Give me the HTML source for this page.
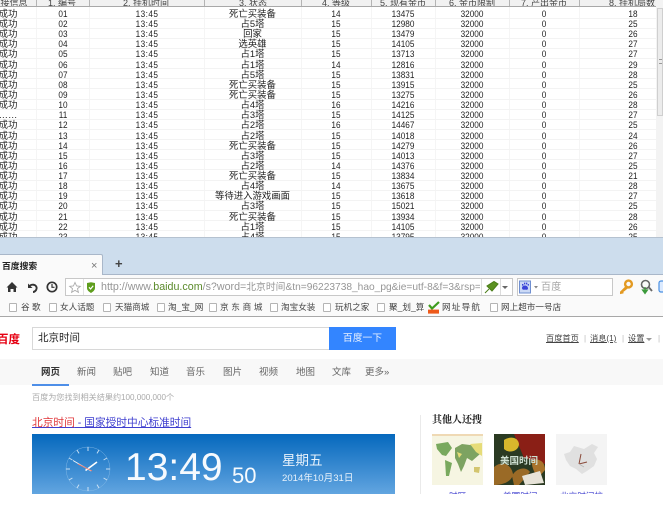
<!DOCTYPE html>
<html lang="zh"><head><meta charset="utf-8"><title>百度搜索</title>
<style>
html,body{margin:0;padding:0;background:#fff}
body{width:663px;height:510px;overflow:hidden;position:relative;font-family:"Liberation Sans","Noto Sans CJK SC",sans-serif;color:#333}
.a{position:absolute;white-space:nowrap}
#tb{position:absolute;left:0;top:0;width:656px;height:237px;overflow:hidden;filter:blur(.3px)}
.r{position:absolute;left:0;width:656px;height:10.13px;border-bottom:1px solid #f3f3f3;box-sizing:border-box}
.r b{position:absolute;top:.6px;font-weight:400;line-height:10px;font-size:9.4px;transform:translateX(-50%) scaleX(.875);white-space:nowrap;color:#222}
.c0{left:8px}.c1{left:62.5px}.c2{left:146.5px;letter-spacing:.5px}.c3{left:252.5px}.c4{left:336px}.c5{left:403px}.c6{left:472px}.c7{left:544px}.c8{left:633px}
.r b.c0,.r b.c3{font-size:9.4px;transform:translateX(-50%)}
.v{position:absolute;top:0;height:237px;width:1px;background:#f5f5f5}
#hd{position:absolute;left:0;top:0;width:656px;height:7px;background:#f1f1f1;border-bottom:1px solid #a8a8a8;overflow:hidden;box-sizing:border-box}
#hd b{position:absolute;top:-2.5px;font-weight:400;font-size:9px;line-height:10px;transform:translateX(-50%);white-space:nowrap;color:#444}
#hd i{position:absolute;top:0;width:1px;height:7px;background:#b4b4b4}
.bm{position:absolute;top:303px;width:8px;height:9px;border:1px solid #b4b4b4;border-radius:1px;box-sizing:border-box;background:#fff}
.bt{position:absolute;top:301px;font-size:8.6px;line-height:12px;color:#444;white-space:nowrap;filter:blur(.2px)}
.nv{position:absolute;top:366px;font-size:9.5px;line-height:14px;color:#666;white-space:nowrap}
.lk{position:absolute;top:333px;font-size:8.2px;line-height:12px;color:#444;text-decoration:underline;white-space:nowrap}
</style></head><body>

<div id="tb">
<div class="v" style="left:36px"></div><div class="v" style="left:89px"></div><div class="v" style="left:204px"></div><div class="v" style="left:301px"></div><div class="v" style="left:371px"></div><div class="v" style="left:435px"></div><div class="v" style="left:509px"></div><div class="v" style="left:579px"></div>
<div class="r" style="top:8.4px"><b class="c0">成功</b><b class="c1">01</b><b class="c2">13:45</b><b class="c3">死亡买装备</b><b class="c4">14</b><b class="c5">13475</b><b class="c6">32000</b><b class="c7">0</b><b class="c8">18</b></div>
<div class="r" style="top:18.5px"><b class="c0">成功</b><b class="c1">02</b><b class="c2">13:45</b><b class="c3">占5塔</b><b class="c4">15</b><b class="c5">12980</b><b class="c6">32000</b><b class="c7">0</b><b class="c8">25</b></div>
<div class="r" style="top:28.7px"><b class="c0">成功</b><b class="c1">03</b><b class="c2">13:45</b><b class="c3">回家</b><b class="c4">15</b><b class="c5">13479</b><b class="c6">32000</b><b class="c7">0</b><b class="c8">26</b></div>
<div class="r" style="top:38.8px"><b class="c0">成功</b><b class="c1">04</b><b class="c2">13:45</b><b class="c3">选英雄</b><b class="c4">15</b><b class="c5">14105</b><b class="c6">32000</b><b class="c7">0</b><b class="c8">27</b></div>
<div class="r" style="top:48.9px"><b class="c0">成功</b><b class="c1">05</b><b class="c2">13:45</b><b class="c3">占1塔</b><b class="c4">15</b><b class="c5">13713</b><b class="c6">32000</b><b class="c7">0</b><b class="c8">27</b></div>
<div class="r" style="top:59.1px"><b class="c0">成功</b><b class="c1">06</b><b class="c2">13:45</b><b class="c3">占1塔</b><b class="c4">14</b><b class="c5">12816</b><b class="c6">32000</b><b class="c7">0</b><b class="c8">29</b></div>
<div class="r" style="top:69.2px"><b class="c0">成功</b><b class="c1">07</b><b class="c2">13:45</b><b class="c3">占5塔</b><b class="c4">15</b><b class="c5">13831</b><b class="c6">32000</b><b class="c7">0</b><b class="c8">28</b></div>
<div class="r" style="top:79.3px"><b class="c0">成功</b><b class="c1">08</b><b class="c2">13:45</b><b class="c3">死亡买装备</b><b class="c4">15</b><b class="c5">13915</b><b class="c6">32000</b><b class="c7">0</b><b class="c8">25</b></div>
<div class="r" style="top:89.4px"><b class="c0">成功</b><b class="c1">09</b><b class="c2">13:45</b><b class="c3">死亡买装备</b><b class="c4">15</b><b class="c5">13275</b><b class="c6">32000</b><b class="c7">0</b><b class="c8">26</b></div>
<div class="r" style="top:99.6px"><b class="c0">成功</b><b class="c1">10</b><b class="c2">13:45</b><b class="c3">占4塔</b><b class="c4">16</b><b class="c5">14216</b><b class="c6">32000</b><b class="c7">0</b><b class="c8">28</b></div>
<div class="r" style="top:109.7px"><b class="c0">……</b><b class="c1">11</b><b class="c2">13:45</b><b class="c3">占3塔</b><b class="c4">15</b><b class="c5">14125</b><b class="c6">32000</b><b class="c7">0</b><b class="c8">27</b></div>
<div class="r" style="top:119.8px"><b class="c0">成功</b><b class="c1">12</b><b class="c2">13:45</b><b class="c3">占2塔</b><b class="c4">16</b><b class="c5">14467</b><b class="c6">32000</b><b class="c7">0</b><b class="c8">25</b></div>
<div class="r" style="top:130px"><b class="c0">成功</b><b class="c1">13</b><b class="c2">13:45</b><b class="c3">占2塔</b><b class="c4">15</b><b class="c5">14018</b><b class="c6">32000</b><b class="c7">0</b><b class="c8">24</b></div>
<div class="r" style="top:140.1px"><b class="c0">成功</b><b class="c1">14</b><b class="c2">13:45</b><b class="c3">死亡买装备</b><b class="c4">15</b><b class="c5">14279</b><b class="c6">32000</b><b class="c7">0</b><b class="c8">26</b></div>
<div class="r" style="top:150.2px"><b class="c0">成功</b><b class="c1">15</b><b class="c2">13:45</b><b class="c3">占3塔</b><b class="c4">15</b><b class="c5">14013</b><b class="c6">32000</b><b class="c7">0</b><b class="c8">27</b></div>
<div class="r" style="top:160.3px"><b class="c0">成功</b><b class="c1">16</b><b class="c2">13:45</b><b class="c3">占2塔</b><b class="c4">14</b><b class="c5">14376</b><b class="c6">32000</b><b class="c7">0</b><b class="c8">25</b></div>
<div class="r" style="top:170.5px"><b class="c0">成功</b><b class="c1">17</b><b class="c2">13:45</b><b class="c3">死亡买装备</b><b class="c4">15</b><b class="c5">13834</b><b class="c6">32000</b><b class="c7">0</b><b class="c8">21</b></div>
<div class="r" style="top:180.6px"><b class="c0">成功</b><b class="c1">18</b><b class="c2">13:45</b><b class="c3">占4塔</b><b class="c4">14</b><b class="c5">13675</b><b class="c6">32000</b><b class="c7">0</b><b class="c8">28</b></div>
<div class="r" style="top:190.7px"><b class="c0">成功</b><b class="c1">19</b><b class="c2">13:45</b><b class="c3">等待进入游戏画面</b><b class="c4">15</b><b class="c5">13618</b><b class="c6">32000</b><b class="c7">0</b><b class="c8">27</b></div>
<div class="r" style="top:200.9px"><b class="c0">成功</b><b class="c1">20</b><b class="c2">13:45</b><b class="c3">占3塔</b><b class="c4">15</b><b class="c5">15021</b><b class="c6">32000</b><b class="c7">0</b><b class="c8">25</b></div>
<div class="r" style="top:211px"><b class="c0">成功</b><b class="c1">21</b><b class="c2">13:45</b><b class="c3">死亡买装备</b><b class="c4">15</b><b class="c5">13934</b><b class="c6">32000</b><b class="c7">0</b><b class="c8">28</b></div>
<div class="r" style="top:221.1px"><b class="c0">成功</b><b class="c1">22</b><b class="c2">13:45</b><b class="c3">占1塔</b><b class="c4">15</b><b class="c5">14105</b><b class="c6">32000</b><b class="c7">0</b><b class="c8">26</b></div>
<div class="r" style="top:231.2px"><b class="c0">成功</b><b class="c1">23</b><b class="c2">13:45</b><b class="c3">占4塔</b><b class="c4">15</b><b class="c5">13795</b><b class="c6">32000</b><b class="c7">0</b><b class="c8">25</b></div>
<div id="hd">
<i style="left:36px"></i><i style="left:89px"></i><i style="left:204px"></i><i style="left:301px"></i><i style="left:371px"></i><i style="left:435px"></i><i style="left:509px"></i><i style="left:579px"></i>
<b style="left:14px">接信息</b><b style="left:62px">1. 编号</b><b style="left:146px">2. 挂机时间</b><b style="left:253px">3. 状态</b><b style="left:336px">4. 等级</b><b style="left:403px">5. 现有金币</b><b style="left:472px">6. 金币限制</b><b style="left:544px">7. 产出金币</b><b style="left:632px">8. 挂机局数</b>
</div>
</div>

<!-- scrollbar -->
<div class="a" style="left:656px;top:0;width:7px;height:237px;background:#f3f3f3"></div>
<div class="a" style="left:657px;top:8px;width:6px;height:108px;background:#ececec;border:1px solid #cfcfcf;box-sizing:border-box"></div>
<div class="a" style="left:659px;top:59px;width:3px;height:5px;border-top:1px solid #999;border-bottom:1px solid #999;box-sizing:border-box"></div>

<!-- browser chrome -->
<div class="a" style="left:0;top:237px;width:663px;height:1px;background:#b5c2d0"></div>
<div class="a" style="left:0;top:238px;width:663px;height:36px;background:#cddded"></div>
<div class="a" style="left:0;top:274px;width:663px;height:1px;background:#a9b7c9"></div>
<div class="a" style="left:0;top:275px;width:663px;height:41px;background:#fafafa"></div>
<div class="a" style="left:0;top:316px;width:663px;height:1px;background:#a8a8a8"></div>
<div class="a" style="left:0;top:254px;width:103px;height:21px;background:#fafafa;border:1px solid #a9b7c9;border-bottom:0;border-left:0;box-sizing:border-box;border-top-right-radius:2px"></div>
<div class="a" style="left:2px;top:260px;font-size:8.8px;line-height:12px;font-weight:700;color:#222;filter:blur(.2px)">百度搜索</div>
<div class="a" style="left:91px;top:260px;font-size:11px;line-height:12px;color:#777">×</div>
<div class="a" style="left:115px;top:257px;font-size:13px;line-height:14px;font-weight:700;color:#444">+</div>

<svg class="a" style="left:0;top:275px" width="64" height="24" viewBox="0 0 64 24">
<path d="M12 7 L17.5 12.5 L16 12.5 L16 17 L13.5 17 L13.5 14 L10.5 14 L10.5 17 L8 17 L8 12.5 L6.5 12.5 Z" fill="#333"/>
<path d="M28 8.5 L28 13 L32.5 13 Z" fill="#333"/>
<path d="M29 12 C30.5 8.5 37 9 36.6 13.5 C36.3 15.5 34.5 17 33 17" fill="none" stroke="#333" stroke-width="1.9"/>
<circle cx="52" cy="12" r="4.7" fill="none" stroke="#333" stroke-width="1.7"/>
<path d="M52 9 L52 12.3 L54.5 12.3" fill="none" stroke="#333" stroke-width="1.2"/>
</svg>

<!-- address bar -->
<div class="a" style="left:65px;top:278px;width:448px;height:18px;background:#fff;border:1px solid #c8c8c8;box-sizing:border-box"></div>
<div class="a" style="left:83px;top:279px;width:1px;height:16px;background:#e2e2e2"></div>
<svg class="a" style="left:68px;top:281px" width="30" height="13" viewBox="0 0 30 13">
<path d="M7 1.5 L8.6 5 L12.3 5.3 L9.5 7.7 L10.4 11.3 L7 9.4 L3.6 11.3 L4.5 7.7 L1.7 5.3 L5.4 5 Z" fill="none" stroke="#aaa" stroke-width=".9"/>
<path d="M19 2 L23 1.2 L27 2 L27 7 C27 9.5 24.5 11 23 12 C21.5 11 19 9.5 19 7 Z" fill="#5f9e1e"/>
<path d="M21 6.3 L22.6 8 L25.2 4.8" fill="none" stroke="#fff" stroke-width="1.2"/>
</svg>
<div class="a" style="left:101px;top:281px;width:379px;height:13px;overflow:hidden;font-size:10.7px;line-height:13px;color:#969696;filter:blur(.2px)">http://www.<span style="color:#5a8a2a">baidu.com</span>/s?word=<span style="font-size:9.8px">北京时间</span><span style="font-size:10.2px">&amp;tn=96223738_hao_pg&amp;ie=utf-8&amp;f=3&amp;rsp=</span></div>
<div class="a" style="left:481px;top:279px;width:1px;height:16px;background:#dcdcdc"></div>
<div class="a" style="left:500px;top:279px;width:1px;height:16px;background:#dcdcdc"></div>
<svg class="a" style="left:483px;top:280px" width="28" height="15" viewBox="0 0 28 15">
<path d="M2 13 L6 9 M4 6 L9 11 L15 4 L11 1.5 Z" fill="#5c9222" stroke="#4b7e1a" stroke-width="1"/>
<path d="M19 6 L25 6 L22 9 Z" fill="#666"/>
</svg>

<!-- search box -->
<div class="a" style="left:517px;top:278px;width:96px;height:18px;background:#fff;border:1px solid #c8c8c8;box-sizing:border-box"></div>
<svg class="a" style="left:519px;top:280px" width="22" height="15" viewBox="0 0 22 15">
<rect x=".5" y="1" width="11" height="12" fill="#cbd9f5" stroke="#6f8fd0"/>
<path d="M3 8 C3 6 5 5.5 6 5.5 C7.5 5.5 9 6.5 9 8.5 C9 10 7 10 6 9.5 C5 10 3 10 3 8 Z M3 4 h1.4 v1.6 h-1.4 z M5 2.6 h1.3 v1.8 h-1.3 z M7 2.6 h1.3 v1.8 h-1.3 z M8.7 4 h1.2 v1.6 h-1.2 z" fill="#3a45d8"/>
<path d="M15 6 L19 6 L17 8.5 Z" fill="#888"/>
</svg>
<div class="a" style="left:541px;top:281px;font-size:10px;line-height:13px;letter-spacing:.2px;color:#a8a8a8">百度</div>

<svg class="a" style="left:618px;top:278px" width="45" height="18" viewBox="0 0 45 18">
<circle cx="10.5" cy="6" r="3.4" fill="none" stroke="#e39a22" stroke-width="2.4"/>
<path d="M8 8.5 L2.5 14 L2.5 15.5 L5 15 L5 13.5 L6.5 12.5 L9.5 10" fill="#e39a22" stroke="#e39a22" stroke-width="1"/>
<circle cx="27.5" cy="6.5" r="4" fill="none" stroke="#666" stroke-width="1.6"/>
<path d="M31 9.5 L34 13" stroke="#666" stroke-width="1.8"/>
<path d="M27 9 L27 13 M24.5 12 L27 15.5 L29.5 12 Z" fill="#3c9a3c" stroke="#3c9a3c" stroke-width="1.2"/>
<rect x="41" y="3" width="6" height="11" rx="2" fill="#dbeaff" stroke="#4a90e2" stroke-width="1.2"/>
</svg>

<!-- bookmarks -->
<div class="bm" style="left:9px"></div><div class="bt" style="left:21px;letter-spacing:2.4px">谷歌</div>
<div class="bm" style="left:49px"></div><div class="bt" style="left:60px">女人话题</div>
<div class="bm" style="left:103px"></div><div class="bt" style="left:115px">天猫商城</div>
<div class="bm" style="left:157px"></div><div class="bt" style="left:168px">淘_宝_网</div>
<div class="bm" style="left:209px"></div><div class="bt" style="left:220px;letter-spacing:2.7px">京东商城</div>
<div class="bm" style="left:270px"></div><div class="bt" style="left:281px">淘宝女装</div>
<div class="bm" style="left:323px"></div><div class="bt" style="left:335px">玩机之家</div>
<div class="bm" style="left:377px"></div><div class="bt" style="left:389px">聚_划_算</div>
<svg class="a" style="left:427px;top:301px" width="14" height="13" viewBox="0 0 14 13">
<path d="M2 4 L5 7.5 L12 1" fill="none" stroke="#3e9c1e" stroke-width="2.2"/>
<rect x="1" y="8.6" width="11" height="4" fill="#ee5a1a"/>
</svg>
<div class="bt" style="left:442px;letter-spacing:1.2px">网址导航</div>
<div class="bm" style="left:490px"></div><div class="bt" style="left:501px">网上超市一号店</div>

<!-- baidu page -->
<div class="a" style="left:-3px;top:331px;font-size:11.5px;line-height:18px;font-weight:700;color:#e60012;letter-spacing:0">百度</div>
<div class="a" style="left:32px;top:327px;width:298px;height:23px;border:1px solid #d8d8d8;box-sizing:border-box;background:#fff"></div>
<div class="a" style="left:38px;top:331px;font-size:10.5px;line-height:15px;color:#222">北京时间</div>
<div class="a" style="left:329px;top:327px;width:67px;height:23px;background:#3385ff;color:#e8f1ff;font-size:9.8px;line-height:23px;text-align:center">百度一下</div>

<div class="lk" style="left:546px">百度首页</div><div class="a" style="left:584px;top:333px;font-size:8px;line-height:12px;color:#bbb">|</div>
<div class="lk" style="left:590px">消息(1)</div><div class="a" style="left:622px;top:333px;font-size:8px;line-height:12px;color:#bbb">|</div>
<div class="lk" style="left:628px">设置</div><div class="a" style="left:646px;top:338px;width:0;height:0;border:3px solid transparent;border-top:3px solid #999;border-bottom:0"></div><div class="a" style="left:658px;top:333px;font-size:8px;line-height:12px;color:#bbb">|</div>

<div class="a" style="left:0;top:359px;width:663px;height:26px;background:#f8f8f8"></div>
<div class="a" style="left:32px;top:384px;width:37px;height:2px;background:#4e8fe8"></div>
<div class="nv" style="left:41px;color:#333;font-weight:700">网页</div>
<div class="nv" style="left:77px">新闻</div><div class="nv" style="left:113px">贴吧</div><div class="nv" style="left:150px">知道</div><div class="nv" style="left:186px">音乐</div><div class="nv" style="left:223px">图片</div><div class="nv" style="left:259px">视频</div><div class="nv" style="left:296px">地图</div><div class="nv" style="left:332px">文库</div><div class="nv" style="left:365px">更多»</div>

<div class="a" style="left:32px;top:392px;font-size:8.1px;line-height:12px;color:#aaa">百度为您找到相关结果约100,000,000个</div>

<div class="a" style="left:32px;top:417px;font-size:10.7px;line-height:13px;text-decoration:underline;color:#3f3fcf;filter:blur(.15px)"><span style="color:#e0363a">北京时间</span> - 国家授时中心标准时间</div>

<div class="a" style="left:32px;top:434px;width:363px;height:60px;background:linear-gradient(#0568bd,#62a5e0)"></div>
<svg class="a" style="left:62px;top:443px" width="52" height="52" viewBox="-26 -26 52 52">
<circle r="22" fill="none" stroke="#8fc0ea" stroke-width=".4"/>
<g stroke="#d8e9f8" stroke-width="1" opacity=".9">
<path d="M0 -22V-18M0 22V18M22 0H18M-22 0H-18M11 -19L9 -15.6M-11 -19L-9 -15.6M11 19L9 15.6M-11 19L-9 15.6M19 -11L15.6 -9M-19 -11L-15.6 -9M19 11L15.6 9M-19 11L-15.6 9"/>
</g>
<path d="M-2.5 1.5 L9 -7" stroke="#fff" stroke-width="1.6"/>
<path d="M3 2 L-15 -8.5" stroke="#f2f6fa" stroke-width=".9"/>
<path d="M4 2 L-10 -5" stroke="#f07a6a" stroke-width=".9"/>
</svg>
<div class="a" style="left:125px;top:445px;font-size:39px;line-height:46px;color:#f6fafe">13:49</div>
<div class="a" style="left:232px;top:462px;font-size:22px;line-height:28px;color:#f6fafe">50</div>
<div class="a" style="left:282px;top:452px;font-size:13.5px;line-height:18px;color:#e8f2fb">星期五</div>
<div class="a" style="left:282px;top:472px;font-size:9.6px;line-height:14px;color:#e8f2fb">2014年10月31日</div>

<div class="a" style="left:420px;top:415px;width:1px;height:79px;background:#eaeaea"></div>
<div class="a" style="left:432px;top:414px;font-size:10px;line-height:14px;font-weight:700;color:#222;font-family:'Liberation Serif','Noto Serif CJK SC',serif">其他人还搜</div>

<svg class="a" style="left:432px;top:434px" width="51" height="51" viewBox="0 0 51 51">
<rect width="51" height="51" fill="#f6f5e2"/><rect width="51" height="2" fill="#efd9b4"/>
<path d="M4 10 L16 8 L20 14 L14 22 L10 21 L5 15 Z M13 26 L20 29 L17 42 L14 42 Z" fill="#79a95e"/>
<path d="M23 14 L30 10 L46 12 L48 20 L40 27 L35 24 L32 32 L29 38 L26 30 L23 24 Z" fill="#7da361"/>
<path d="M38 10 L50 9 L50 22 L44 18 Z M25 18 L30 20 L27 24 Z" fill="#e6dc78"/>
<path d="M42 33 L48 33 L47 39 L42 38 Z" fill="#d3c56f"/>
</svg>
<svg class="a" style="left:494px;top:434px" width="51" height="51" viewBox="0 0 51 51">
<rect width="51" height="51" fill="#2a3a22"/>
<path d="M20 0H51V30L30 24Z" fill="#8a1f16"/>
<path d="M10 6 C16 2 24 3 25 10 C25 17 15 20 10 15 Z" fill="#d8b72c"/>
<path d="M0 33 C8 26 17 30 19 40 C18 48 8 51 0 51 Z M18 42 C22 34 32 32 36 38 L25 51H20Z" fill="#9a6a26"/>
<path d="M38 26 C46 24 51 28 51 36 L44 44 C40 38 37 32 38 26Z" fill="#a9742c"/>
<path d="M28 42 L46 37 L50 49 L31 51 Z" fill="#e7e3d8"/>
<text x="6" y="30" font-size="9.5" font-weight="700" fill="#cfe0d2" font-family="Liberation Sans,Noto Sans CJK SC,sans-serif">美国时间</text>
</svg>
<svg class="a" style="left:556px;top:434px" width="51" height="51" viewBox="0 0 51 51">
<rect width="51" height="51" fill="#f4f4f4"/>
<path d="M8 20 L14 18 L18 12 L28 15 L36 10 L42 13 L38 19 L41 25 L38 32 L31 37 L26 40 L20 35 L14 32 L10 26 Z" fill="#e0e0e0"/>
<path d="M25 20 L23 30 M23 30 L31 28" stroke="#8a4a3a" stroke-width="1" fill="none"/>
<path d="M23 30 L28 33" stroke="#b8b8b8" stroke-width=".8"/>
</svg>
<div class="a" style="left:432px;top:490px;width:180px;height:4px;overflow:hidden;font-size:8.6px;line-height:12px;color:#3f3fcf">
<span class="a" style="left:17px;top:0">时区</span><span class="a" style="left:71px;top:0">美国时间</span><span class="a" style="left:128px;top:0">北京时间校</span></div>
</body></html>
